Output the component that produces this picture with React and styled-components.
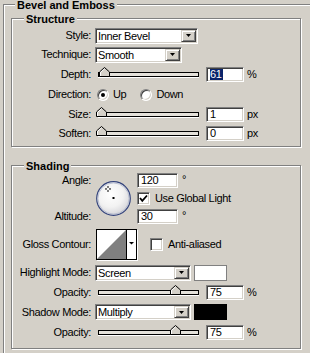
import React from "react";
import styled, { createGlobalStyle } from "styled-components";

const GlobalStyle = createGlobalStyle`
    *, *::before, *::after {
        box-sizing: border-box;
    }
    html, body {
        margin: 0;
        padding: 0;
        width: 310px;
        height: 353px;
        overflow: hidden;
        background: #d4d0c8;
    }
    body {
        font-family: "Liberation Sans", Arial, sans-serif;
        font-size: 11px;
        line-height: 13px;
        letter-spacing: -0.35px;
        color: #000;
    }
`

const Frame = styled.fieldset`
    margin: 0;
    min-width: 0;
    border: 1px solid #808080;
    box-shadow: inset 1px 1px 0 #fff, 1px 1px 0 #fff;
`

const Panel = styled(Frame)`
    width: 340px;
    margin: -2px 0 0 3px;
    padding: 1px 0 30px 7px;
`

const Group = styled(Frame)`
    width: 290px;
    margin-top: ${p => p.$top || 0}px;
    padding: ${p => p.$pt}px 0 ${p => p.$pb}px 0;
`

// legend box stays 13px tall, text sits one pixel lower
const Title = styled.legend`
    margin-left: ${p => p.$indent}px;
    padding: 2px 2px 0;
    font-weight: bold;
    line-height: 11px;
    letter-spacing: 0;
    background: #d4d0c8;
`

const Row = styled.div`
    display: flex;
    align-items: center;
    height: ${p => p.$h}px;
`

const Label = styled.div`
    flex: none;
    width: 79px;
    margin-right: 4px;
    text-align: right;
    white-space: nowrap;
`

const sunken = `
    border: 1px solid;
    border-color: #808080 #fff #fff #808080;
    box-shadow: inset 1px 1px 0 #404040, inset -1px -1px 0 #d4d0c8;
`

const Combo = styled.div`
    display: flex;
    flex: none;
    width: ${p => p.$w}px;
    height: 16px;
    padding: 1px;
    background: #fff;
    ${sunken}
`

const ComboText = styled.span`
    flex: 1;
    padding-left: 1px;
    line-height: 12px;
    white-space: nowrap;
`

const ComboButton = styled.span`
    display: flex;
    align-items: center;
    justify-content: center;
    width: 15px;
    height: 12px;
    background: #d4d0c8;
    border: 1px solid;
    border-color: #d4d0c8 #404040 #404040 #d4d0c8;
    box-shadow: inset 1px 1px 0 #fff, inset -1px -1px 0 #808080;
`

const Track = styled.div`
    position: relative;
    flex: none;
    width: 101px;
    height: 5px;
    margin-left: 3px;
    background: #e4e1da;
    border: 1px solid #000;
    box-shadow: 0 1px 0 #fff;
`

const Thumb = styled.svg`
    position: absolute;
    top: -6px;
    left: ${p => -3 + p.$pos * 97}px;
`

const Field = styled.div`
    display: flex;
    align-items: center;
    flex: none;
    width: ${p => p.$w}px;
    height: 15px;
    margin-left: ${p => p.$ml || 0}px;
    padding-left: 3px;
    background: #fff;
    ${sunken}
`

const Selected = styled.span`
    background: #0a246a;
    color: #fff;
    line-height: 11px;
    padding-right: 1px;
`

const Unit = styled.span`
    margin-left: ${p => p.$ml || 3}px;
    align-self: ${p => (p.$raised ? "flex-start" : "center")};
    margin-top: ${p => (p.$raised ? 1 : 0)}px;
`

const Radio = styled.span`
    position: relative;
    flex: none;
    width: 12px;
    height: 12px;
    margin-left: ${p => p.$ml}px;
    border-radius: 50%;
    background: #fff;
    border: 1px solid;
    border-color: #808080 #fff #fff #808080;
    box-shadow: inset 1px 1px 0 #404040, inset -1px -1px 0 #d4d0c8;

    &::after {
        content: "";
        display: ${p => (p.$on ? "block" : "none")};
        position: absolute;
        left: 3px;
        top: 3px;
        width: 4px;
        height: 4px;
        border-radius: 50%;
        background: #000;
    }
`

const Caption = styled.span`
    margin-left: ${p => p.$ml || 4}px;
    white-space: nowrap;
`

const Box = styled.span`
    display: flex;
    align-items: center;
    justify-content: center;
    flex: none;
    width: 13px;
    height: 13px;
    margin-left: ${p => p.$ml || 0}px;
    background: #fff;
    ${sunken}
`

const DialGrid = styled.div`
    display: grid;
    grid-template-columns: 83px 42px auto;
    grid-template-rows: 17px 19px 17px;
`

const GridLabel = styled(Label)`
    grid-column: 1;
    grid-row: ${p => p.$row};
    align-self: center;
`

const Dial = styled.svg`
    grid-column: 2;
    grid-row: 1 / span 3;
    margin: 9px 0 0 1px;
`

const Cell = styled.div`
    grid-column: 3;
    grid-row: ${p => p.$row};
    display: flex;
    align-items: center;
`

const Contour = styled.svg`
    flex: none;
    margin-left: 1px;
    box-shadow: 1px 1px 0 #fff;
`

const Swatch = styled.span`
    flex: none;
    width: 33px;
    height: 16px;
    margin-left: 3px;
    background: ${p => p.$color};
    border: 1px solid ${p => (p.$color === "#fff" ? "#808080" : "#000")};
`

const Arrow = () => (
    <svg width="5" height="3" viewBox="0 0 5 3">
        <polygon points="0,0 5,0 2.5,3" fill="#000" />
    </svg>
)

const Select = ({ width, value }) => (
    <Combo $w={width}>
        <ComboText>{value}</ComboText>
        <ComboButton><Arrow /></ComboButton>
    </Combo>
)

const Slider = ({ pos }) => (
    <Track>
        <Thumb $pos={pos} width="11" height="10" viewBox="0 0 11 10">
            <polygon points="0.5,5 5.5,0.5 10.5,5 10.5,9.5 0.5,9.5" fill="#d4d0c8" stroke="#000" />
            <polyline points="1.5,9 1.5,5.4 5.5,1.8" fill="none" stroke="#fff" />
        </Thumb>
    </Track>
)

const Check = ({ ml, on }) => (
    <Box $ml={ml}>
        {on && (
            <svg width="9" height="9" viewBox="0 0 9 9">
                <polyline points="1,4 3.3,6.8 8,1.5" fill="none" stroke="#000" strokeWidth="1.8" />
            </svg>
        )}
    </Box>
)

const SliderRow = ({ h, label, pos, value, unit, selected }) => (
    <Row $h={h}>
        <Label>{label}</Label>
        <Slider pos={pos} />
        <Field $w={38} $ml={7}>
            {selected ? <Selected>{value}</Selected> : value}
        </Field>
        <Unit>{unit}</Unit>
    </Row>
)

const App = () => {
    const cx = 17.5
    const cy = 17.5
    const a = (120 * Math.PI) / 180
    const mx = cx + Math.cos(a) * 11
    const my = cy - Math.sin(a) * 11

    return (
        <>
            <GlobalStyle />
            <Panel>
                <Title $indent={4}>Bevel and Emboss</Title>

                <Group $pt={1} $pb={3}>
                    <Title $indent={12}>Structure</Title>
                    <Row $h={19}>
                        <Label>Style:</Label>
                        <Select width={103} value="Inner Bevel" />
                    </Row>
                    <Row $h={19}>
                        <Label>Technique:</Label>
                        <Select width={87} value="Smooth" />
                    </Row>
                    <SliderRow h={20} label="Depth:" pos={0.03} value="61" unit="%" selected />
                    <Row $h={21}>
                        <Label>Direction:</Label>
                        <Radio $ml={2} $on />
                        <Caption>Up</Caption>
                        <Radio $ml={14} />
                        <Caption>Down</Caption>
                    </Row>
                    <SliderRow h={18} label="Size:" pos={0} value="1" unit="px" />
                    <SliderRow h={20} label="Soften:" pos={0} value="0" unit="px" />
                </Group>

                <Group $top={12} $pt={0} $pb={6}>
                    <Title $indent={12}>Shading</Title>
                    <DialGrid>
                        <GridLabel $row={1}>Angle:</GridLabel>
                        <GridLabel $row={3}>Altitude:</GridLabel>
                        <Dial width="35" height="35" viewBox="0 0 35 35">
                            <defs>
                                <radialGradient id="dialFill" cx="0.42" cy="0.38" r="0.62">
                                    <stop offset="0" stopColor="#ffffff" />
                                    <stop offset="0.6" stopColor="#f2f2f2" />
                                    <stop offset="1" stopColor="#d6d6da" />
                                </radialGradient>
                            </defs>
                            <circle cx={cx} cy={cy} r="16.8" fill="url(#dialFill)" stroke="#34447c" strokeWidth="1.2" />
                            <circle cx={cx} cy={cy} r="15.6" fill="none" stroke="#aeb6cc" strokeWidth="0.8" />
                            <g stroke="#000" strokeWidth="1">
                                <line x1={mx - 3} y1={my} x2={mx - 1} y2={my} />
                                <line x1={mx + 1} y1={my} x2={mx + 3} y2={my} />
                                <line x1={mx} y1={my - 3} x2={mx} y2={my - 1} />
                                <line x1={mx} y1={my + 1} x2={mx} y2={my + 3} />
                            </g>
                            <rect x="16.5" y="16" width="2" height="2" fill="#000" />
                        </Dial>
                        <Cell $row={1}>
                            <Field $w={41}>120</Field>
                            <Unit $ml={4} $raised>°</Unit>
                        </Cell>
                        <Cell $row={2}>
                            <Check on />
                            <Caption $ml={5}>Use Global Light</Caption>
                        </Cell>
                        <Cell $row={3}>
                            <Field $w={41}>30</Field>
                            <Unit $ml={4} $raised>°</Unit>
                        </Cell>
                    </DialGrid>

                    <Row $h={38}>
                        <Label>Gloss Contour:</Label>
                        <Contour width="41" height="31" viewBox="0 0 41 31">
                            <rect x="0.5" y="0.5" width="40" height="30" fill="#fff" stroke="#000" />
                            <polygon points="1,30 30,1 30,30" fill="#808080" />
                            <line x1="30.5" y1="1" x2="30.5" y2="30" stroke="#000" />
                            <polygon points="33,13 38,13 35.5,15.5" fill="#000" />
                        </Contour>
                        <Check ml={13} />
                        <Caption $ml={5}>Anti-aliased</Caption>
                    </Row>

                    <Row $h={19}>
                        <Label>Highlight Mode:</Label>
                        <Select width={96} value="Screen" />
                        <Swatch $color="#fff" />
                    </Row>
                    <SliderRow h={20} label="Opacity:" pos={0.76} value="75" unit="%" />
                    <Row $h={20}>
                        <Label>Shadow Mode:</Label>
                        <Select width={96} value="Multiply" />
                        <Swatch $color="#000" />
                    </Row>
                    <SliderRow h={20} label="Opacity:" pos={0.76} value="75" unit="%" />
                </Group>
            </Panel>
        </>
    )
}

export default App
